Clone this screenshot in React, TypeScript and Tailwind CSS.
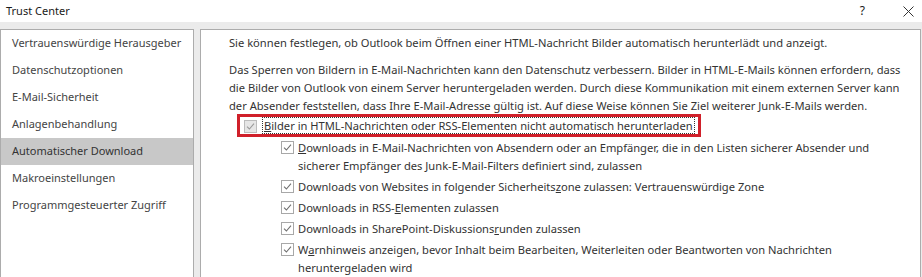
import React from 'react';

const nav = [
  'Vertrauenswürdige Herausgeber',
  'Datenschutzoptionen',
  'E-Mail-Sicherheit',
  'Anlagenbehandlung',
  'Automatischer Download',
  'Makroeinstellungen',
  'Programmgesteuerter Zugriff',
];

function Check({ disabled }: { disabled?: boolean }) {
  return (
    <span
      className={
        'mt-[2px] flex h-[13px] w-[13px] shrink-0 items-center justify-center border ' +
        (disabled ? 'border-[#bcbcbc] bg-[#e6e6e6]' : 'border-[#a8a8a8] bg-white')
      }
    >
      <svg width="9" height="9" viewBox="0 0 9 9">
        <path
          d="M1 4.6 L3.4 7 L8 1.6"
          fill="none"
          stroke={disabled ? '#9a9a9a' : '#707070'}
          strokeWidth="1.1"
        />
      </svg>
    </span>
  );
}

function Item({ children }: { children: React.ReactNode }) {
  return (
    <div className="flex gap-[4px]">
      <Check />
      <div className="leading-[18px]">{children}</div>
    </div>
  );
}

export default function App() {
  return (
    <div
      className="h-[277px] w-[922px] overflow-hidden bg-white text-[11.15px] text-[#333]"
      style={{ fontFamily: '"Noto Sans", "Open Sans", sans-serif' }}
    >
      <div className="flex h-[22px] items-center justify-between pl-[6px] pr-[8px] text-[11px] text-[#1a1a1a]">
        <span>Trust Center</span>
        <div className="flex items-center gap-[38px]">
          <span className="text-[12px]">?</span>
          <svg width="11" height="11" viewBox="0 0 11 11">
            <path d="M0.5 0.5 L10.5 10.5 M10.5 0.5 L0.5 10.5" stroke="#333" strokeWidth="1" />
          </svg>
        </div>
      </div>
      <div className="flex h-[255px] gap-[6px] bg-[#ebebeb] pt-[7px] pr-[1px]">
        <div className="w-[194px] border border-b-0 border-[#acacac] bg-white text-[11px] text-[#444]">
          {nav.map((n) => (
            <div
              key={n}
              className={
                'flex h-[27px] items-center whitespace-nowrap px-[11px] ' +
                (n === 'Automatischer Download' ? 'bg-[#c8c8c8] text-[#333]' : '')
              }
            >
              {n}
            </div>
          ))}
        </div>
        <div className="flex-1 border border-b-0 border-[#acacac] bg-white pl-[28px] pt-[4px]">
          <p className="leading-[18px]">
            Sie können festlegen, ob Outlook beim Öffnen einer HTML-Nachricht Bilder automatisch herunterlädt und anzeigt.
          </p>
          <p className="mt-[9px] whitespace-nowrap leading-[18px]">
            Das Sperren von Bildern in E-Mail-Nachrichten kann den Datenschutz verbessern. Bilder in HTML-E-Mails können erfordern, dass
            <br />
            die Bilder von Outlook von einem Server heruntergeladen werden. Durch diese Kommunikation mit einem externen Server kann
            <br />
            der Absender feststellen, dass Ihre E-Mail-Adresse gültig ist. Auf diese Weise können Sie Ziel weiterer Junk-E-Mails werden.
          </p>
          <div className="-mt-[1px] ml-[8px] flex w-fit items-center gap-[5px] border-[3px] border-[#d0202a] pl-[4px] pr-[3px]">
            <Check disabled />
            <span className="border border-dotted border-[#333] px-[1px] leading-[15px]">
              <u>B</u>ilder in HTML-Nachrichten oder RSS-Elementen nicht automatisch herunterladen
            </span>
          </div>
          <div className="ml-[52px] mt-[2px] flex flex-col gap-[3px] whitespace-nowrap">
            <Item>
              <u>D</u>ownloads in E-Mail-Nachrichten von Absendern oder an Empfänger, die in den Listen sicherer Absender und
              <br />
              sicherer Empfänger des Junk-E-Mail-Filters definiert sind, zulassen
            </Item>
            <Item>
              Downloads von Websites in folgender Sicherheits<u>z</u>one zulassen: Vertrauenswürdige Zone
            </Item>
            <Item>
              Downloads in RSS-<u>E</u>lementen zulassen
            </Item>
            <Item>
              Downloads in SharePoint-Diskussions<u>r</u>unden zulassen
            </Item>
            <Item>
              W<u>a</u>rnhinweis anzeigen, bevor Inhalt beim Bearbeiten, Weiterleiten oder Beantworten von Nachrichten
              <br />
              heruntergeladen wird
            </Item>
          </div>
        </div>
      </div>
    </div>
  );
}
